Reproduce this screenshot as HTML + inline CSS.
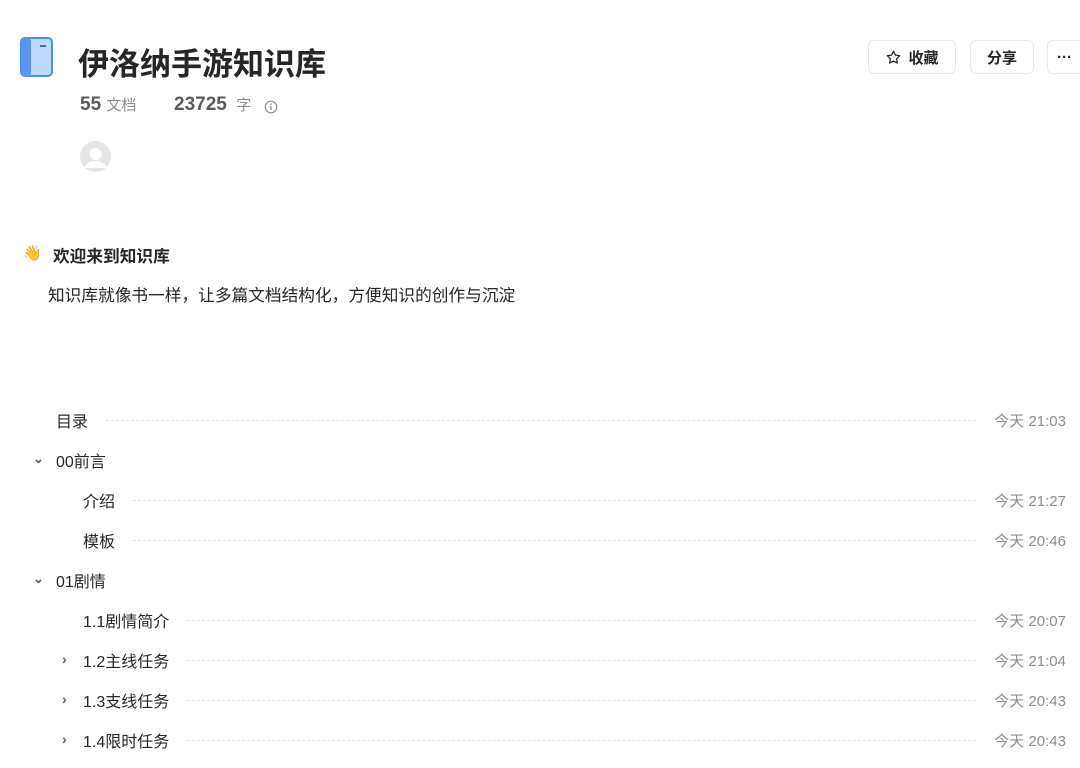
<!DOCTYPE html><html><head><meta charset="utf-8"><style>
body{margin:0;width:1080px;height:768px;overflow:hidden;background:#fff;font-family:"Liberation Sans","Noto Sans CJK SC",sans-serif;color:#262626;position:relative}
.a{position:absolute}
.btn{position:absolute;top:40px;height:34px;border:1px solid #e7e9e8;border-radius:6px;box-sizing:border-box;font-size:15px;font-weight:bold;display:flex;align-items:center;justify-content:center;color:#262626}
.row{position:absolute;left:0;width:1066px;height:40px;display:flex;align-items:center;font-size:16px;color:#262626}
.row .t{white-space:nowrap}
.row .l{flex:1;border-top:1px dashed #e3e3e3;margin:0 18px 0 18px;height:0}
.row .d{font-size:15px;color:#8a8f8d}
.ch{position:absolute;font-size:11px;color:#585a5a}
</style></head><body>
<svg class="a" style="left:20px;top:37px" width="33" height="40" viewBox="0 0 33 40"><rect x="1" y="1" width="31" height="38" rx="4" fill="#bfd9fb" stroke="#4e8ef0" stroke-width="2"/><rect x="1" y="1" width="10" height="38" rx="3" fill="#5a96ee"/><line x1="20" y1="9" x2="26" y2="9" stroke="#3a6fc8" stroke-width="2"/></svg>
<div class="a" style="left:78px;top:39px;font-size:31px;font-weight:bold;color:#262626">伊洛纳手游知识库</div>
<div class="a" style="left:80px;top:94px;font-size:19px;font-weight:bold;color:#585a5a">55 <span style="font-size:15px;font-weight:normal;color:#8a8f8d">文档</span></div>
<div class="a" style="left:174px;top:94px;font-size:19px;font-weight:bold;color:#585a5a">23725 <span style="font-size:15px;font-weight:normal;color:#8a8f8d">&nbsp;字</span></div>
<svg class="a" style="left:264px;top:100px" width="14" height="14" viewBox="0 0 14 14"><circle cx="7" cy="7" r="5.8" fill="none" stroke="#8a8f8d" stroke-width="1.2"/><line x1="7" y1="6" x2="7" y2="10" stroke="#8a8f8d" stroke-width="1.3"/><circle cx="7" cy="4.2" r=".8" fill="#8a8f8d"/></svg>
<svg class="a" style="left:80px;top:141px" width="31" height="31" viewBox="0 0 31 31"><circle cx="15.5" cy="15.5" r="15.5" fill="#e4e5e6"/><circle cx="15.5" cy="13" r="6" fill="#fff"/><path d="M4 27c3-6 7-7 11.5-7s8.5 1 11.5 7" fill="#fff"/></svg>
<div class="btn" style="left:868px;width:88px"><svg width="17" height="17" viewBox="0 0 24 24" style="margin-right:6px"><path d="M12 3l2.7 5.6 6.1.9-4.4 4.3 1 6.1L12 17l-5.4 2.9 1-6.1-4.4-4.3 6.1-.9z" fill="none" stroke="#262626" stroke-width="1.8" stroke-linejoin="round"/></svg>收藏</div>
<div class="btn" style="left:970px;width:64px">分享</div>
<div class="btn" style="left:1047px;width:50px;justify-content:flex-start;padding-left:9px">···</div>
<div class="a" style="left:23px;top:244px;font-size:15px">👋</div>
<div class="a" style="left:53px;top:243px;font-size:16.7px;font-weight:bold">欢迎来到知识库</div>
<div class="a" style="left:48px;top:282px;font-size:16.7px">知识库就像书一样，让多篇文档结构化，方便知识的创作与沉淀</div>
<div class="row" style="top:400px;padding-left:56px;box-sizing:border-box"><span class="t">目录</span><span class="l"></span><span class="d">今天 21:03</span></div>
<div class="row" style="top:440px;padding-left:56px;box-sizing:border-box"><span class="t">00前言</span></div><div class="ch" style="left:33px;top:451px;font-size:13px;font-weight:bold">⌄</div>
<div class="row" style="top:480px;padding-left:83px;box-sizing:border-box"><span class="t">介绍</span><span class="l"></span><span class="d">今天 21:27</span></div>
<div class="row" style="top:520px;padding-left:83px;box-sizing:border-box"><span class="t">模板</span><span class="l"></span><span class="d">今天 20:46</span></div>
<div class="row" style="top:560px;padding-left:56px;box-sizing:border-box"><span class="t">01剧情</span></div><div class="ch" style="left:33px;top:571px;font-size:13px;font-weight:bold">⌄</div>
<div class="row" style="top:600px;padding-left:83px;box-sizing:border-box"><span class="t">1.1剧情简介</span><span class="l"></span><span class="d">今天 20:07</span></div>
<div class="row" style="top:640px;padding-left:83px;box-sizing:border-box"><span class="t">1.2主线任务</span><span class="l"></span><span class="d">今天 21:04</span></div><div class="ch" style="left:62px;top:651px;font-size:14px;font-weight:bold">›</div>
<div class="row" style="top:680px;padding-left:83px;box-sizing:border-box"><span class="t">1.3支线任务</span><span class="l"></span><span class="d">今天 20:43</span></div><div class="ch" style="left:62px;top:691px;font-size:14px;font-weight:bold">›</div>
<div class="row" style="top:720px;padding-left:83px;box-sizing:border-box"><span class="t">1.4限时任务</span><span class="l"></span><span class="d">今天 20:43</span></div><div class="ch" style="left:62px;top:731px;font-size:14px;font-weight:bold">›</div>
</body></html>
